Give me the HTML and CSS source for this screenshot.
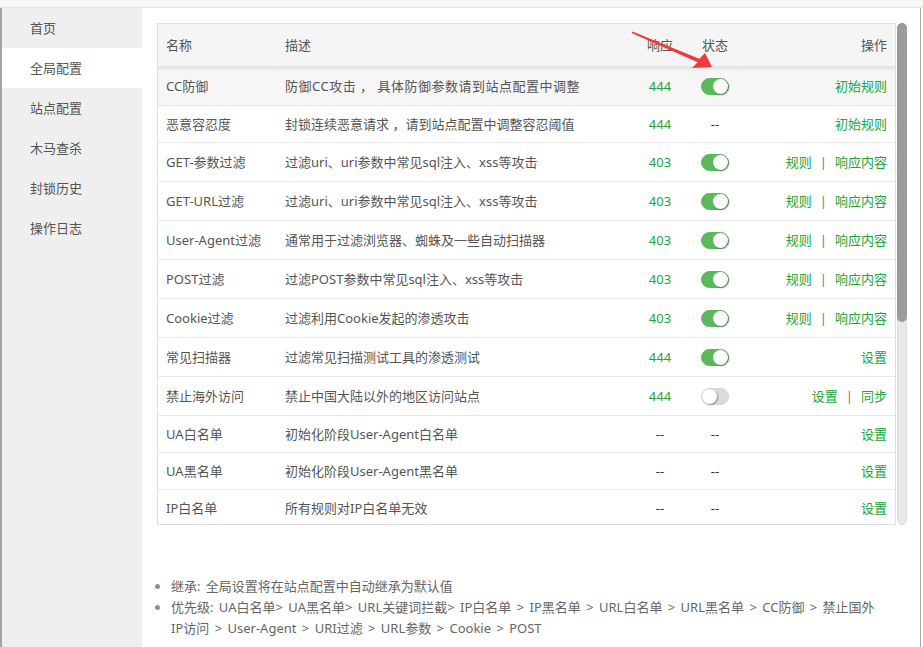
FILE: index.html
```html
<!DOCTYPE html>
<html lang="zh-CN">
<head>
<meta charset="utf-8">
<title>全局配置</title>
<link rel="stylesheet" href="styles.css">
</head>
<body>
<div class="frame">
  <div class="topbar"></div>
  <div class="layout">
    <div class="edge-left"></div>
    <nav class="side">
      <div class="side-item">首页</div>
      <div class="side-item active">全局配置</div>
      <div class="side-item">站点配置</div>
      <div class="side-item">木马查杀</div>
      <div class="side-item">封锁历史</div>
      <div class="side-item">操作日志</div>
    </nav>
    <main class="main">
      <div class="table-wrap">
        <div class="table-box">
          <table class="grid">
            <colgroup>
              <col class="c-name"><col class="c-desc"><col class="c-resp"><col class="c-state"><col>
            </colgroup>
            <thead>
              <tr><th>名称</th><th>描述</th><th class="ctr">响应</th><th class="ctr">状态</th><th class="rt">操作</th></tr>
            </thead>
            <tbody>
              <tr class="hover"><td>CC防御</td><td class="wide">防御CC攻击&nbsp;，&nbsp;具体防御参数请到站点配置中调整</td><td class="ctr num">444</td><td class="ctr"><div class="sw-cell"><span class="switch on"></span></div></td><td class="rt"><a class="lnk">初始规则</a></td></tr>
              <tr><td>恶意容忍度</td><td>封锁连续恶意请求&nbsp;，请到站点配置中调整容忍阈值</td><td class="ctr num">444</td><td class="ctr dash">--</td><td class="rt"><a class="lnk">初始规则</a></td></tr>
              <tr><td>GET-参数过滤</td><td>过滤uri、uri参数中常见sql注入、xss等攻击</td><td class="ctr num">403</td><td class="ctr"><div class="sw-cell"><span class="switch on"></span></div></td><td class="rt"><a class="lnk">规则</a><span class="sep">|</span><a class="lnk">响应内容</a></td></tr>
              <tr><td>GET-URL过滤</td><td>过滤uri、uri参数中常见sql注入、xss等攻击</td><td class="ctr num">403</td><td class="ctr"><div class="sw-cell"><span class="switch on"></span></div></td><td class="rt"><a class="lnk">规则</a><span class="sep">|</span><a class="lnk">响应内容</a></td></tr>
              <tr><td>User-Agent过滤</td><td>通常用于过滤浏览器、蜘蛛及一些自动扫描器</td><td class="ctr num">403</td><td class="ctr"><div class="sw-cell"><span class="switch on"></span></div></td><td class="rt"><a class="lnk">规则</a><span class="sep">|</span><a class="lnk">响应内容</a></td></tr>
              <tr><td>POST过滤</td><td>过滤POST参数中常见sql注入、xss等攻击</td><td class="ctr num">403</td><td class="ctr"><div class="sw-cell"><span class="switch on"></span></div></td><td class="rt"><a class="lnk">规则</a><span class="sep">|</span><a class="lnk">响应内容</a></td></tr>
              <tr><td>Cookie过滤</td><td>过滤利用Cookie发起的渗透攻击</td><td class="ctr num">403</td><td class="ctr"><div class="sw-cell"><span class="switch on"></span></div></td><td class="rt"><a class="lnk">规则</a><span class="sep">|</span><a class="lnk">响应内容</a></td></tr>
              <tr><td>常见扫描器</td><td>过滤常见扫描测试工具的渗透测试</td><td class="ctr num">444</td><td class="ctr"><div class="sw-cell"><span class="switch on"></span></div></td><td class="rt"><a class="lnk">设置</a></td></tr>
              <tr><td>禁止海外访问</td><td>禁止中国大陆以外的地区访问站点</td><td class="ctr num">444</td><td class="ctr"><div class="sw-cell"><span class="switch"></span></div></td><td class="rt"><a class="lnk">设置</a><span class="sep">|</span><a class="lnk">同步</a></td></tr>
              <tr><td>UA白名单</td><td>初始化阶段User-Agent白名单</td><td class="ctr dash">--</td><td class="ctr dash">--</td><td class="rt"><a class="lnk">设置</a></td></tr>
              <tr><td>UA黑名单</td><td>初始化阶段User-Agent黑名单</td><td class="ctr dash">--</td><td class="ctr dash">--</td><td class="rt"><a class="lnk">设置</a></td></tr>
              <tr><td>IP白名单</td><td>所有规则对IP白名单无效</td><td class="ctr dash">--</td><td class="ctr dash">--</td><td class="rt"><a class="lnk">设置</a></td></tr>
            </tbody>
          </table>
        </div>
        <div class="scrollbar"><div class="thumb"></div></div>
      </div>
      <ul class="notes">
        <li>继承: 全局设置将在站点配置中自动继承为默认值</li>
        <li>优先级: UA白名单&gt; UA黑名单&gt; URL关键词拦截&gt; IP白名单 &gt; IP黑名单 &gt; URL白名单 &gt; URL黑名单 &gt; CC防御 &gt; 禁止国外IP访问 &gt; User-Agent &gt; URI过滤 &gt; URL参数 &gt; Cookie &gt; POST</li>
      </ul>
    </main>
    <div class="edge-right"></div>
  </div>
  <svg class="arrow" width="923" height="647" viewBox="0 0 923 647" aria-hidden="true">
    <polygon points="632.4,31.5 699.3,58.7 705,53 712,67 692,68 697.7,62.3 631.6,32.9" fill="#f03a3a"/>
  </svg>
</div>
</body>
</html>
```
FILE: styles.css
```css
* { box-sizing: border-box; }
html, body { margin: 0; padding: 0; }
body {
  width: 923px;
  height: 647px;
  overflow: hidden;
  background: #fff;
  font-family: "Noto Sans", "Noto Sans CJK SC", sans-serif;
  font-size: 13px;
  color: #555;
}
.frame {
  position: relative;
  width: 923px;
  height: 647px;
  display: flex;
  flex-direction: column;
}
.topbar {
  height: 8px;
  flex: none;
  background: #f7f7f7;
  border-bottom: 1px solid #e6e6e6;
}
.layout {
  flex: 1;
  display: flex;
  min-height: 0;
}
.edge-left {
  width: 2px;
  flex: none;
  background: #a3a3a3;
}
.side {
  width: 140px;
  flex: none;
  background: #efefef;
}
.side-item {
  height: 40px;
  line-height: 40px;
  padding-left: 28px;
  font-size: 13px;
  color: #555;
}
.side-item.active { background: #fff; }
.main {
  width: 778px;
  flex: none;
  background: #fff;
  padding: 15px 0 0 15px;
}
.edge-right {
  width: 3px;
  flex: none;
  background: #fff;
  border-left: 1px solid #a8a8a8;
}
.table-wrap {
  display: flex;
  height: 502px;
}
.table-box {
  width: 739px;
  height: 502px;
  border: 1px solid #dedede;
  overflow: hidden;
}
.scrollbar {
  width: 10px;
  margin-left: 1px;
  height: 502px;
  background: #e9e9e9;
  border: 1px solid #dcdcdc;
  border-radius: 5px;
}
.thumb {
  height: 299px;
  margin: -1px;
  background: #9b9b9b;
  border-radius: 5px;
}
.grid {
  width: 100%;
  border-collapse: collapse;
  table-layout: fixed;
}
.c-name { width: 119px; }
.c-desc { width: 355px; }
.c-resp { width: 56px; }
.c-state { width: 54px; }
.grid th {
  background: #f5f5f5;
  font-weight: normal;
  text-align: left;
  color: #555;
  padding: 11px 8px;
  line-height: 20px;
  border-bottom: 1px solid #e4e4e4;
  white-space: nowrap;
}
.grid td {
  padding: 8px 8px;
  line-height: 20px;
  border-bottom: 1px solid #e8e8e8;
  white-space: nowrap;
  color: #555;
  vertical-align: middle;
}
.grid td.wide { letter-spacing: 0.5px; }
.grid tbody tr:first-child td {
  box-shadow: inset 0 5px 4px -4px rgba(0, 0, 0, 0.12);
}
.grid tr.hover td { background-color: #f6f6f6; }
.grid .ctr { text-align: center; }
.grid .rt { text-align: right; }
.grid td.num { color: #20a53a; }
.grid td.dash { color: #333; }
.sw-cell {
  height: 22px;
  display: flex;
  align-items: center;
  justify-content: center;
}
.switch {
  position: relative;
  display: block;
  width: 28px;
  height: 17px;
  border-radius: 9px;
  background: #dcdcdc;
  border: 1px solid #d2d2d2;
}
.switch::after {
  content: "";
  position: absolute;
  top: 0px;
  left: 0px;
  width: 15px;
  height: 15px;
  border-radius: 50%;
  background: #fff;
  box-shadow: 1px 1px 2px rgba(0, 0, 0, 0.35);
}
.switch.on {
  background: #5cb85c;
  border-color: #5cb85c;
}
.switch.on::after {
  left: auto;
  right: 0px;
}
.lnk {
  color: #20a53a;
  text-decoration: none;
}
.sep {
  color: #777;
  margin: 0 8px;
}
.notes {
  list-style: none;
  margin: 51px 0 0 0;
  padding: 0;
  width: 724px;
  color: #666;
  font-size: 13px;
  line-height: 21px;
  word-spacing: 2px;
}
.notes li {
  position: relative;
  padding-left: 14px;
}
.notes li::before {
  content: "";
  position: absolute;
  left: -2px;
  top: 8px;
  width: 5px;
  height: 5px;
  border-radius: 50%;
  background: #8f8f8f;
}
.arrow {
  position: absolute;
  left: 0;
  top: 0;
  pointer-events: none;
}
```
